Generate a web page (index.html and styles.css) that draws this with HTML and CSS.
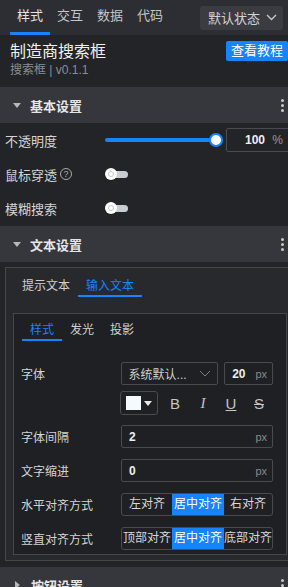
FILE: index.html
```html
<!DOCTYPE html>
<html lang="zh-CN">
<head>
    <meta charset="UTF-8">
    <meta name="viewport" content="width=device-width, initial-scale=1.0">
    <title>样式面板</title>
    <link rel="stylesheet" href="styles.css">
</head>
<body>
<div class="panel">

    <div class="topbar">
        <div class="tabs">
            <span class="tab active">样式</span>
            <span class="tab">交互</span>
            <span class="tab">数据</span>
            <span class="tab">代码</span>
        </div>
        <div class="state-select">
            默认状态
            <svg class="chevron" width="11" height="7" viewBox="0 0 11 7"><polyline points="1,1 5.5,5.5 10,1" fill="none" stroke="#c8c8c8" stroke-width="1.4"/></svg>
        </div>
    </div>

    <div class="comp-head">
        <div class="comp-info">
            <div class="comp-title">制造商搜索框</div>
            <div class="comp-sub">搜索框 | v0.1.1</div>
        </div>
        <button class="btn-guide">查看教程</button>
    </div>

    <!-- 基本设置 -->
    <div class="section-head">
        <span class="caret down"></span>
        <span class="section-title">基本设置</span>
        <span class="dots"><i></i><i></i><i></i></span>
    </div>

    <div class="row">
        <span class="label">不透明度</span>
        <div class="slider">
            <div class="track"></div>
            <div class="thumb"></div>
        </div>
        <div class="num-input">
            <span class="value">100</span>
            <span class="unit">%</span>
        </div>
    </div>
    <div class="row">
        <span class="label">鼠标穿透 <span class="help">?</span></span>
        <div class="switch"><span class="knob"></span></div>
    </div>
    <div class="row">
        <span class="label">模糊搜索</span>
        <div class="switch"><span class="knob"></span></div>
    </div>

    <!-- 文本设置 -->
    <div class="section-head gap-top">
        <span class="caret down"></span>
        <span class="section-title">文本设置</span>
        <span class="dots"><i></i><i></i><i></i></span>
    </div>

    <div class="outer-box">
        <div class="sub-tabs">
            <span class="sub-tab">提示文本</span>
            <span class="sub-tab active">输入文本</span>
        </div>

        <div class="inner-box">
            <div class="sub-tabs small">
                <span class="sub-tab active">样式</span>
                <span class="sub-tab">发光</span>
                <span class="sub-tab">投影</span>
            </div>

            <div class="field">
                <span class="field-label">字体</span>
                <div class="select">
                    <span>系统默认...</span>
                    <svg width="12" height="7" viewBox="0 0 12 7"><polyline points="1,1 6,6 11,1" fill="none" stroke="#7d7e83" stroke-width="1"/></svg>
                </div>
                <div class="input size">
                    <span class="value">20</span>
                    <span class="unit">px</span>
                </div>
            </div>
            <div class="field sub">
                <span class="field-label"></span>
                <div class="color-btn">
                    <span class="swatch"></span>
                    <span class="tri"></span>
                </div>
                <div class="font-styles">
                    <span class="fs bold">B</span>
                    <span class="fs italic">I</span>
                    <span class="fs under">U</span>
                    <span class="fs strike">S</span>
                </div>
            </div>
            <div class="field">
                <span class="field-label">字体间隔</span>
                <div class="input wide">
                    <span class="value">2</span>
                    <span class="unit">px</span>
                </div>
            </div>
            <div class="field">
                <span class="field-label">文字缩进</span>
                <div class="input wide">
                    <span class="value">0</span>
                    <span class="unit">px</span>
                </div>
            </div>
            <div class="field">
                <span class="field-label">水平对齐方式</span>
                <div class="btn-group">
                    <span class="seg">左对齐</span>
                    <span class="seg active">居中对齐</span>
                    <span class="seg">右对齐</span>
                </div>
            </div>
            <div class="field last">
                <span class="field-label">竖直对齐方式</span>
                <div class="btn-group">
                    <span class="seg">顶部对齐</span>
                    <span class="seg active">居中对齐</span>
                    <span class="seg">底部对齐</span>
                </div>
            </div>
        </div>
    </div>

    <!-- 按钮设置 -->
    <div class="section-head gap-bottom">
        <span class="caret right"></span>
        <span class="section-title">按钮设置</span>
        <span class="dots"><i></i><i></i><i></i></span>
    </div>

</div>
</body>
</html>
```

FILE: styles.css
```css
/* General */
body {
    margin: 0;
    background-color: #232427;
    color: #d6d6d6;
    font-family: "Liberation Sans", "Noto Sans CJK SC", sans-serif;
    overflow: hidden;
}

.panel {
    width: 296px;
}

/* Top tabs */
.topbar {
    display: flex;
    align-items: center;
    height: 35px;
    background-color: #2d2e33;
    padding-left: 10px;
}

.tabs {
    display: flex;
    align-self: flex-end;
}

.tab {
    width: 40px;
    height: 32px;
    line-height: 32px;
    text-align: center;
    font-size: 13px;
    color: #c6c6c6;
    border-bottom: 3px solid transparent;
}

.tab.active {
    color: #e4e4e4;
    border-bottom-color: #1683ff;
}

.state-select {
    display: flex;
    align-items: center;
    margin-left: auto;
    margin-right: 13px;
    height: 24px;
    padding: 0 6px 0 8px;
    background-color: #3b3c42;
    border-radius: 3px;
    font-size: 13px;
    color: #d2d2d2;
}

.state-select .chevron {
    margin-left: 6px;
}

/* Component header */
.comp-head {
    display: flex;
    height: 52px;
    padding: 0 8px 0 10px;
    background-color: #232427;
}

.comp-info {
    flex: 1;
}

.comp-title {
    margin-top: 7px;
    font-size: 16px;
    line-height: 20px;
    color: #f0f0f0;
}

.comp-sub {
    font-size: 12px;
    line-height: 16px;
    color: #8c8d92;
}

.btn-guide {
    margin-top: 6px;
    height: 20px;
    padding: 0 5px;
    border: none;
    border-radius: 2px;
    background-color: #1683ff;
    color: #fff;
    font-family: inherit;
    font-size: 13px;
    line-height: 20px;
}

/* Section header */
.section-head {
    display: flex;
    align-items: center;
    height: 36px;
    padding: 0 12px 0 13px;
    background-color: #36373c;
}

.section-head.gap-top {
    margin-top: 1px;
}

.section-head.gap-bottom {
    margin-top: 6px;
}

.caret {
    width: 0;
    height: 0;
    margin-right: 9px;
}

.caret.down {
    border-left: 4px solid transparent;
    border-right: 4px solid transparent;
    border-top: 5px solid #b8b8b8;
}

.caret.right {
    margin-left: 2px;
    margin-right: 11px;
    border-top: 4px solid transparent;
    border-bottom: 4px solid transparent;
    border-left: 5px solid #b8b8b8;
}

.section-title {
    font-size: 13px;
    font-weight: bold;
    color: #e6e6e6;
}

.dots {
    display: flex;
    flex-direction: column;
    gap: 2px;
    margin-left: auto;
}

.dots i {
    display: block;
    width: 3px;
    height: 3px;
    border-radius: 50%;
    background-color: #c8c8c8;
}

/* Basic rows */
.row {
    display: flex;
    align-items: center;
    height: 34px;
    padding-left: 5px;
}

.label {
    display: flex;
    align-items: center;
    width: 100px;
    font-size: 13px;
    color: #d4d4d4;
}

.help {
    width: 10px;
    height: 10px;
    margin-left: 3px;
    border: 1px solid #a8a8a8;
    border-radius: 50%;
    font-size: 9px;
    line-height: 10px;
    text-align: center;
    color: #a8a8a8;
}

.slider {
    position: relative;
    width: 116px;
    height: 12px;
}

.track {
    position: absolute;
    left: 0;
    top: 4px;
    width: 110px;
    height: 4px;
    border-radius: 2px;
    background-color: #1683ff;
}

.thumb {
    position: absolute;
    left: 104px;
    top: -1px;
    width: 10px;
    height: 10px;
    border: 2px solid #1683ff;
    border-radius: 50%;
    background-color: #fff;
}

.num-input {
    display: flex;
    align-items: center;
    margin-left: 5px;
    width: 62px;
    height: 22px;
    border: 1px solid #4a4b50;
    border-radius: 2px;
}

.num-input .value {
    padding-left: 18px;
    font-size: 12px;
    font-weight: bold;
    color: #eee;
}

.num-input .unit {
    margin-left: auto;
    padding-right: 6px;
    font-size: 12px;
    color: #999;
}

.switch {
    position: relative;
    width: 23px;
    height: 12px;
}

.switch::before {
    content: "";
    position: absolute;
    left: 6px;
    top: 3px;
    width: 17px;
    height: 7px;
    border-radius: 4px;
    background-color: #c9ccd2;
}

.knob {
    position: absolute;
    left: 0;
    top: 0;
    width: 12px;
    height: 12px;
    border-radius: 50%;
    background-color: #fff;
}

.knob::after {
    content: "";
    position: absolute;
    left: 3px;
    top: 3px;
    width: 4px;
    height: 4px;
    border: 1px solid #c6c8cc;
    border-radius: 50%;
}

/* Text settings */
.outer-box {
    margin: 5px 3px 0 5px;
    padding: 0 5px 5px 7px;
    border: 1px solid #45464b;
    background-color: #28292d;
}

.sub-tabs {
    display: flex;
    margin-top: 9px;
    margin-left: 1px;
}

.sub-tab {
    padding: 0 8px;
    height: 18px;
    line-height: 18px;
    font-size: 12px;
    color: #d0d0d0;
    border-bottom: 2px solid transparent;
}

.sub-tab.active {
    color: #1683ff;
    border-bottom-color: #1683ff;
}

.inner-box {
    margin-top: 16px;
    padding: 0 13px 4px 7px;
    border: 1px solid #45464b;
    background-color: #1f2023;
}

.sub-tabs.small {
    margin-top: 7px;
    margin-bottom: 21px;
}

.field {
    display: flex;
    align-items: center;
    margin-bottom: 11px;
}

.field.sub {
    margin-top: -5px;
    margin-bottom: 10px;
}

.field.last {
    margin-bottom: 0;
}

.field-label {
    width: 100px;
    font-size: 12px;
    color: #d4d4d4;
}

.select {
    display: flex;
    align-items: center;
    justify-content: space-between;
    width: 83px;
    height: 21px;
    padding: 0 6px 0 7px;
    border: 1px solid #4a4b50;
    border-radius: 2px;
    font-size: 12px;
    color: #cfcfcf;
}

.input {
    display: flex;
    align-items: center;
    height: 21px;
    border: 1px solid #4a4b50;
    border-radius: 2px;
    padding: 0 5px 0 7px;
}

.input.size {
    margin-left: 6px;
    width: 35px;
}

.input.wide {
    width: 138px;
}

.input .value {
    font-size: 12px;
    font-weight: bold;
    color: #eee;
}

.input .unit {
    margin-left: auto;
    font-size: 11px;
    color: #8a8a8a;
}

.color-btn {
    display: flex;
    align-items: center;
    width: 37px;
    height: 22px;
    border: 1px solid #4a4b50;
    border-radius: 3px;
}

.swatch {
    width: 15px;
    height: 14px;
    margin-left: 5px;
    background-color: #f5faff;
}

.tri {
    width: 0;
    height: 0;
    margin-left: 3px;
    border-left: 4px solid transparent;
    border-right: 4px solid transparent;
    border-top: 5px solid #e8e8e8;
}

.font-styles {
    display: flex;
    margin-left: 3px;
}

.fs {
    width: 28px;
    text-align: center;
    font-size: 15px;
    color: #c4c4c4;
}

.fs.italic {
    font-family: "Liberation Serif", serif;
    font-style: italic;
}

.fs.under {
    text-decoration: underline;
}

.fs.strike {
    text-decoration: line-through;
}

.btn-group {
    display: grid;
    grid-template-columns: 50px 52px 1fr;
    width: 150px;
    height: 21px;
    border: 1px solid #4a4b50;
    border-radius: 3px;
    overflow: hidden;
}

.seg {
    font-size: 12px;
    line-height: 21px;
    text-align: center;
    white-space: nowrap;
    color: #d8d8d8;
}

.seg.active {
    background-color: #1683ff;
    color: #fff;
}
```
